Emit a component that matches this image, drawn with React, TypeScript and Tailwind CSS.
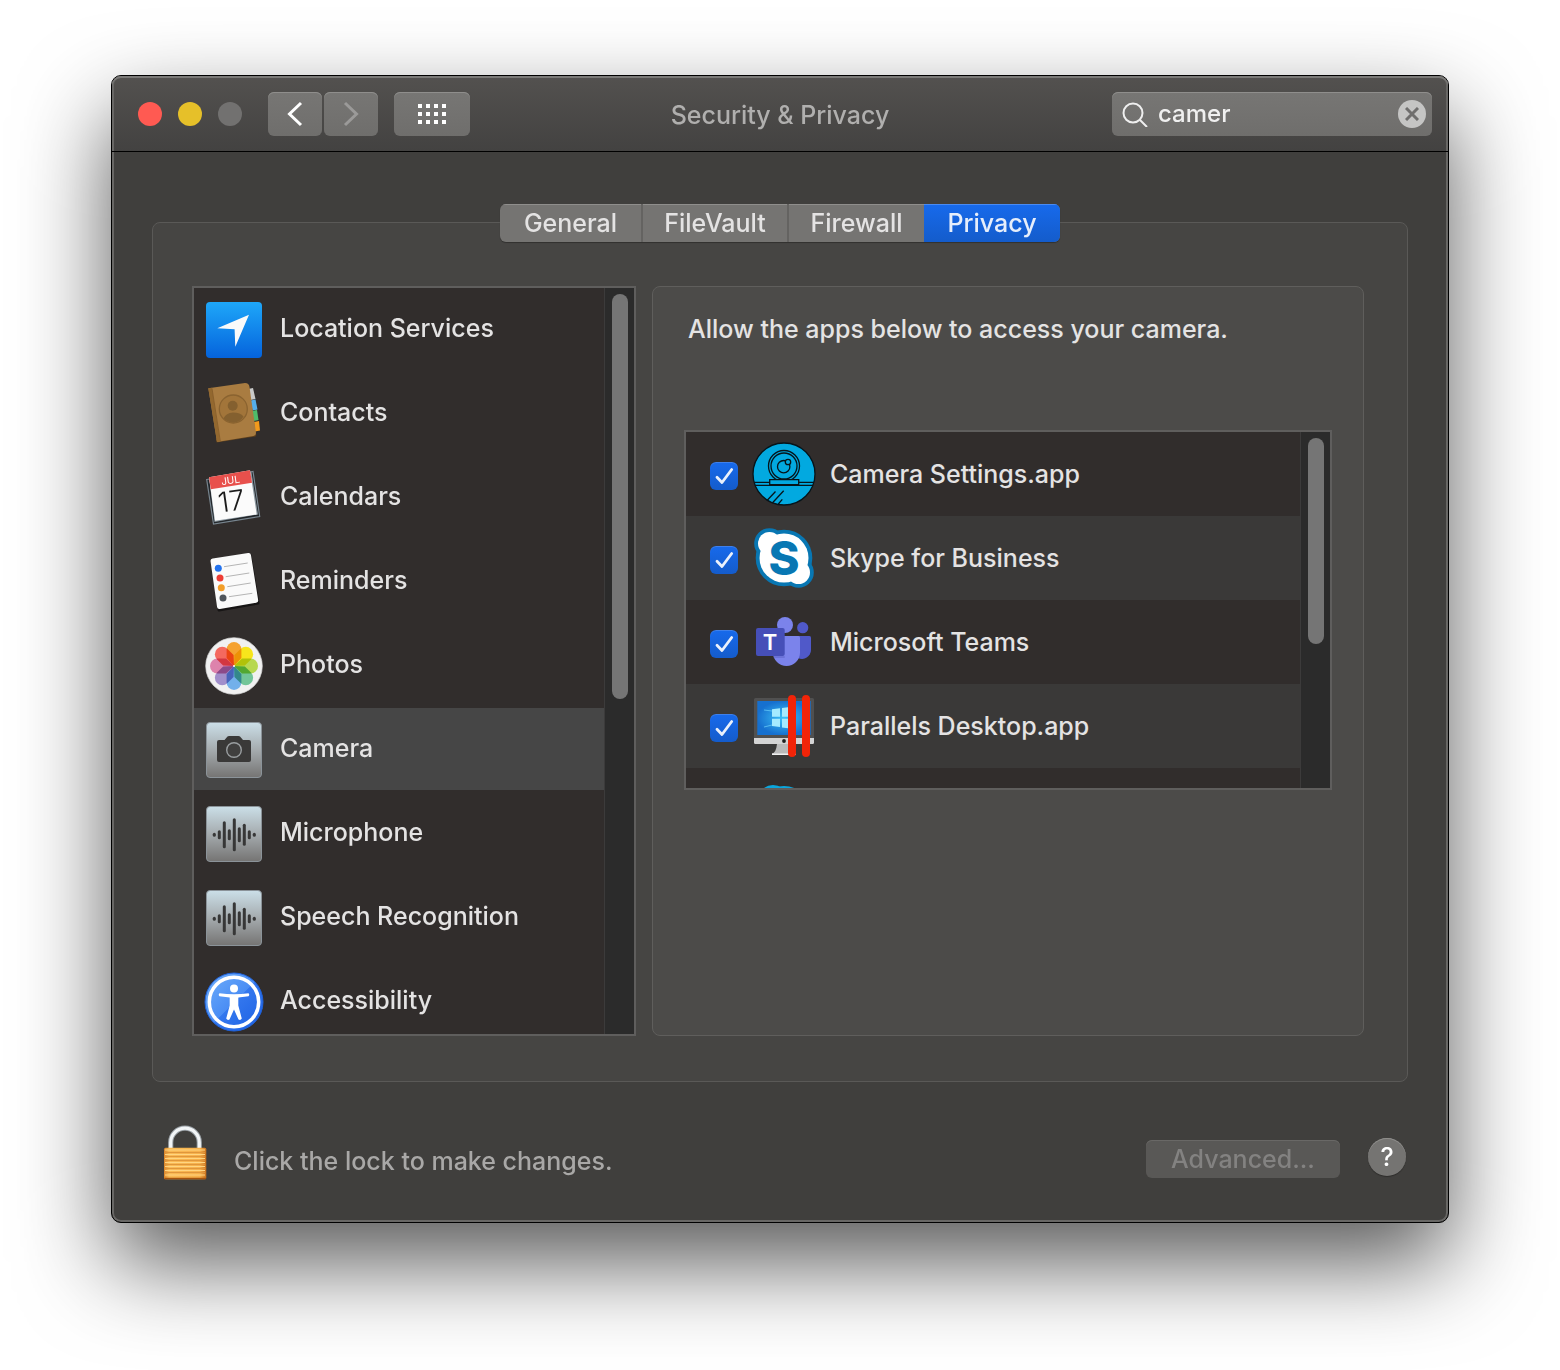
import { useState, type ReactNode } from 'react'
import { cx } from 'class-variance-authority'

const tabs = [
    { name: 'General', width: 'w-[143px]' },
    { name: 'FileVault', width: 'w-[146px]' },
    { name: 'Firewall', width: 'w-[135px]' },
    { name: 'Privacy', width: 'w-[136px]' },
]

function LocationIcon() {
    return (
        <svg viewBox="0 0 60 60" className="size-15 shrink-0 overflow-visible">
            <defs>
                <linearGradient id="loc" x1="0" y1="0" x2="0" y2="1">
                    <stop offset="0" stopColor="#1ea7f9" />
                    <stop offset="1" stopColor="#0563dc" />
                </linearGradient>
            </defs>
            <rect x="2" y="2" width="56" height="56" rx="4" fill="url(#loc)" />
            <path d="M45 14.7 13.3 28.3 30.6 29.3 31.3 46.7Z" fill="#fafafa" />
        </svg>
    )
}

function ContactsIcon() {
    return (
        <svg viewBox="0 0 60 60" className="size-15 shrink-0 overflow-visible">
            <path d="M44 5l5-1 2.5 11-5 1z" fill="#c9c9c9" />
            <path d="M46.5 16.5l5-1 2 10-5 1z" fill="#55aeea" />
            <path d="M48 27l5-1 1.5 10-5 1z" fill="#4fbb6a" />
            <path d="M50 38l5-1 1 9.5-5 1z" fill="#f29a1c" />
            <path d="M12.7 58.5 51.5 52.5Q53 51 51.5 49L50 47 12 55z" fill="#5e401d" />
            <path d="M4.3 4.3 41-1Q45-1 45.5 3L52 49Q52 51.5 49.5 52L13 58Z" fill="#a97c41" />
            <path d="M4.3 4.3 7.8 3.8 16 57.5 13 58Z" fill="#93682f" />
            <path d="M8 4.3 16.3 57" stroke="#7f5827" strokeWidth=".7" fill="none" />
            <circle cx="29.3" cy="25" r="14" fill="#a2753a" stroke="#8a6330" strokeWidth="1.3" />
            <circle cx="28.7" cy="21.7" r="5" fill="#84602f" />
            <path d="M19.5 34.5Q22 29 29 28.5 36.5 28.5 39.5 32.5 36 38.3 30 38.5 24 38.8 19.5 34.5Z" fill="#84602f" />
        </svg>
    )
}

function CalendarIcon() {
    return (
        <svg viewBox="0 0 60 60" className="size-15 shrink-0 overflow-visible">
            <path d="M2.7 11.5 49 3.5 55.7 48.5 9.5 56Z" fill="#22262a" stroke="#78858f" strokeWidth="1.2" />
            <path d="M5 9.5 47.5 4 54 46.5 10.5 54Z" fill="#8b979f" />
            <path d="M5 9.3 46 2.3 52.7 46.5 11 52.7Z" fill="#fbfbfb" />
            <path d="M5 9.3 46 2.3 48 14.7 6.8 21.3Z" fill="#e8504c" />
            <g transform="rotate(-8 27 30)" textAnchor="middle" className="font-[Inter,sans-serif]">
                <text x="29" y="16" fontSize="10" fontWeight="400" fill="#fff">JUL</text>
                <text x="27" y="43" fontSize="28" fontWeight="300" fill="#1b1b1b">17</text>
            </g>
        </svg>
    )
}

function RemindersIcon() {
    return (
        <svg viewBox="0 0 60 60" className="size-15 shrink-0 overflow-visible">
            <path d="M10 8 46 3 54 51 15 58Z" stroke="#171515" strokeWidth="3" strokeLinejoin="round" />
            <path d="M9 9 44.5 3.5 51.7 48.3 15.5 54.5Z" fill="#fafafa" stroke="#fafafa" strokeWidth="5" strokeLinejoin="round" />
            <circle cx="14.3" cy="16.3" r="3.5" fill="#2272ee" />
            <circle cx="16" cy="26" r="3.5" fill="#ee3d35" />
            <circle cx="17.3" cy="35.7" r="3.5" fill="#f29e2a" />
            <circle cx="19" cy="46" r="3.5" fill="#50565c" />
            <path d="M20 14.7 43.7 11M21.7 24.7 45.3 21M23.3 34.7 46.7 31M25 44.7 48.3 41.3" stroke="#b5b5b5" strokeWidth="1" />
        </svg>
    )
}

const petals = ['#f5a230', '#f7e51c', '#b7d850', '#72c598', '#72b0ea', '#a18fcb', '#dd83ac', '#f4695f']

function PhotosIcon() {
    return (
        <svg viewBox="0 0 60 60" className="size-15 shrink-0 overflow-visible">
            <circle cx="30" cy="30" r="28.3" fill="#f1f1f1" stroke="#d6d6d6" strokeWidth=".7" />
            <g className="isolate">
                {petals.map((color, i) => (
                    <path
                        key={color}
                        d="M30 30 22.6 22V13.4A7.4 7.4 0 0 1 37.4 13.4V22Z"
                        fill={color}
                        transform={`rotate(${i * 45} 30 30)`}
                        className="mix-blend-multiply"
                    />
                ))}
            </g>
            <circle cx="30" cy="30" r="1" fill="#fff" />
        </svg>
    )
}

function SilverTile({ id, children }: { id: string; children: ReactNode }) {
    return (
        <svg viewBox="0 0 60 60" className="size-15 shrink-0 overflow-visible">
            <defs>
                <linearGradient id={id} x1="0" y1="0" x2="0" y2="1">
                    <stop offset="0" stopColor="#cbdfe8" />
                    <stop offset=".5" stopColor="#a5abae" />
                    <stop offset="1" stopColor="#757473" />
                </linearGradient>
            </defs>
            <rect x="2.5" y="2.5" width="55" height="55" rx="3.5" fill={`url(#${id})`} stroke="#8b9399" strokeWidth="1" />
            {children}
        </svg>
    )
}

function CameraIcon() {
    return (
        <SilverTile id="tile-camera">
            <path d="M15 20H20.5L23.5 16.5Q24 16 25 16H34.5Q35.5 16 36 16.5L39 20H45Q47 20 47 22V40Q47 42 45 42H15Q13 42 13 40V22Q13 20 15 20Z" fill="#3a3938" />
            <circle cx="30" cy="30" r="7.3" fill="#403f3e" stroke="#9a9ea0" strokeWidth="1.4" />
        </SilverTile>
    )
}

const waveBars = [4, 9, 27, 11, 33, 15, 22, 9, 4]

function WaveIcon({ id }: { id: string }) {
    return (
        <SilverTile id={id}>
            {waveBars.map((height, i) => (
                <rect key={i} x={8.8 + i * 5} y={30.7 - height / 2} width="3" height={height} rx="1.5" fill="#373737" />
            ))}
        </SilverTile>
    )
}

function AccessibilityIcon() {
    return (
        <svg viewBox="0 0 60 60" className="size-15 shrink-0 overflow-visible">
            <defs>
                <linearGradient id="acc" x1="0" y1="0" x2="1" y2="1">
                    <stop offset=".1" stopColor="#69a9fa" />
                    <stop offset=".5" stopColor="#4a8df4" />
                    <stop offset=".51" stopColor="#3377ee" />
                    <stop offset="1" stopColor="#1c5fe2" />
                </linearGradient>
            </defs>
            <circle cx="30" cy="30" r="29" fill="url(#acc)" stroke="#1f62dc" strokeWidth="1" />
            <circle cx="30" cy="30" r="24.7" fill="none" stroke="#fff" strokeWidth="3.5" />
            <circle cx="30" cy="16.5" r="4" fill="#fff" />
            <path d="M15.500 21.200Q30 23.500 44.500 21.200 46 22.800 44.500 24.200L34.300 25.600V33.500L37.800 46.600Q36.500 48.800 34.500 47.500L30 37.500 25.500 47.500Q23.500 48.800 22.200 46.600L25.700 33.500V25.600L15.500 24.200Q14 22.800 15.500 21.200Z" fill="#fff" />
        </svg>
    )
}

function WebcamIcon() {
    return (
        <svg viewBox="0 0 64 64" className="size-16 shrink-0" fill="none" stroke="#06141a" strokeWidth="1.3">
            <circle cx="32" cy="32" r="31" fill="#02a9e0" />
            <circle cx="32" cy="24" r="15.5" />
            <circle cx="32" cy="24" r="13" />
            <circle cx="31.7" cy="24.7" r="6.2" />
            <circle cx="36" cy="20" r="2.7" fill="#02a9e0" />
            <path d="M2.5 40.3H17.7M46.7 40.3H61.5M3 43.3H61" />
            <path d="M17.7 37.7H46.7V42.7H17.7Z" fill="#02a9e0" />
            <path d="M23.5 49.5 15 58.5M31.7 48.7 20.3 61M30.3 57.3 26.3 62" />
        </svg>
    )
}

function SkypeBusinessIcon() {
    return (
        <svg viewBox="0 0 64 64" className="size-16 shrink-0">
            <g fill="#0877b3">
                <circle cx="32" cy="32" r="28.3" />
                <circle cx="17.5" cy="17.5" r="15.3" />
                <circle cx="46.5" cy="46.5" r="15.3" />
            </g>
            <g fill="#fff">
                <circle cx="32" cy="32" r="24.5" />
                <circle cx="17.5" cy="17.5" r="11.5" />
                <circle cx="46.5" cy="46.5" r="11.5" />
            </g>
            <text x="32" y="49" fontSize="47" fontWeight="800" textAnchor="middle" fill="#0877b3" className="font-[Inter,sans-serif]">S</text>
        </svg>
    )
}

function TeamsIcon() {
    return (
        <svg viewBox="0 0 64 64" className="size-16 shrink-0">
            <circle cx="50.7" cy="17.7" r="5.6" fill="#5059c9" />
            <path d="M46 26H57.5Q59 26 59 27.5V40A9 9 0 0 1 46 48Z" fill="#5059c9" />
            <circle cx="33" cy="15" r="8" fill="#7b83eb" />
            <path d="M21 26H46.5Q48 26 48 27.5V42.5A13.5 13.5 0 0 1 21 42.5Z" fill="#7b83eb" />
            <path d="M21 46H32.7V48H21.8Z" fill="#5b62c6" opacity=".5" />
            <rect x="4" y="18" width="28.7" height="28" rx="2" fill="#464fb8" />
            <text x="18" y="40" fontSize="22" fontWeight="600" textAnchor="middle" fill="#fff" className="font-[Inter,sans-serif]">T</text>
        </svg>
    )
}

function ParallelsIcon() {
    return (
        <svg viewBox="0 0 64 64" className="size-16 shrink-0">
            <defs>
                <radialGradient id="win">
                    <stop offset="0" stopColor="#3cc3f8" />
                    <stop offset="1" stopColor="#1670cf" />
                </radialGradient>
            </defs>
            <path d="M25 50H40V59H44V61H20V59.5Q24 59 25 50Z" fill="#b9b9b9" />
            <path d="M20 59.5H44V61H20Z" fill="#f0f0f0" />
            <rect x="2" y="4" width="60" height="46" rx="1.5" fill="#505050" />
            <path d="M2 44H62V48.5Q62 50 60.5 50H3.5Q2 50 2 48.5Z" fill="#d4d4d4" />
            <rect x="5.3" y="7" width="53.4" height="34" fill="url(#win)" />
            <path d="M20 15.3 28 14.3V22.7H20ZM30 14 38 13V22.7H30ZM20 24.7H28V33L20 32ZM30 24.7H38V34.5L30 33.4Z" fill="#a5ebff" />
            <path d="M12 16 20 17M12 33 20 31" stroke="#6fd2fa" strokeWidth=".7" />
            <circle cx="32" cy="47" r="1.9" fill="#1e1e1e" />
            <rect x="36" y="1" width="8" height="62" rx="4" fill="#f22408" />
            <rect x="50" y="1" width="8" height="62" rx="4" fill="#f22408" />
        </svg>
    )
}

function SkypeIcon() {
    return (
        <svg viewBox="0 0 64 64" className="size-16 shrink-0">
            <circle cx="32" cy="35" r="27" fill="#0ba5dc" />
            <circle cx="21" cy="22" r="15" fill="#0ba5dc" />
        </svg>
    )
}

function LockIcon() {
    return (
        <svg viewBox="0 0 44 56" className="h-14 w-11 shrink-0">
            <defs>
                <linearGradient id="lock" x1="0" y1="0" x2="1" y2="0">
                    <stop offset="0" stopColor="#d9842a" />
                    <stop offset=".12" stopColor="#f9bb55" />
                    <stop offset=".85" stopColor="#f6b04a" />
                    <stop offset="1" stopColor="#c8701c" />
                </linearGradient>
            </defs>
            <path d="M7.7 24V17.5A14.3 14.3 0 0 1 36.3 17.5V24" fill="none" stroke="#9aa1a6" strokeWidth="5.2" />
            <path d="M7.7 24V17.5A14.3 14.3 0 0 1 36.3 17.5V24" fill="none" stroke="#f2f5f7" strokeWidth="3.2" />
            <rect x="1" y="22.7" width="42.3" height="31.6" rx="1.5" fill="url(#lock)" />
            <path d="M2 27.5H42M2 31.5H42M2 35.5H42M2 39.5H42M2 43.5H42M2 47.5H42" stroke="#e0963c" strokeWidth="1" />
            <path d="M2 25H42M2 29.5H42M2 33.5H42M2 37.5H42M2 41.5H42M2 45.5H42M2 50H42" stroke="#ffd582" strokeWidth="1" />
            <path d="M1.5 53.5H43" stroke="#a4530f" strokeWidth="1.5" />
        </svg>
    )
}

const categories = [
    { name: 'Location Services', icon: <LocationIcon /> },
    { name: 'Contacts', icon: <ContactsIcon /> },
    { name: 'Calendars', icon: <CalendarIcon /> },
    { name: 'Reminders', icon: <RemindersIcon /> },
    { name: 'Photos', icon: <PhotosIcon /> },
    { name: 'Camera', icon: <CameraIcon /> },
    { name: 'Microphone', icon: <WaveIcon id="tile-mic" /> },
    { name: 'Speech Recognition', icon: <WaveIcon id="tile-speech" /> },
    { name: 'Accessibility', icon: <AccessibilityIcon /> },
]

const apps = [
    { name: 'Camera Settings.app', icon: <WebcamIcon /> },
    { name: 'Skype for Business', icon: <SkypeBusinessIcon /> },
    { name: 'Microsoft Teams', icon: <TeamsIcon /> },
    { name: 'Parallels Desktop.app', icon: <ParallelsIcon /> },
]

function Scrollbar({ thumb }: { thumb: string }) {
    return (
        <div className="w-[30px] shrink-0 border-l border-[#3c3b3b] bg-[#2b2b2b] pl-[7px] pt-1.5">
            <div className={cx('w-4 rounded-full bg-[#757575]', thumb)} />
        </div>
    )
}

export default function App() {
    const [query, setQuery] = useState('camer')
    const [tab, setTab] = useState('Privacy')
    const [category, setCategory] = useState('Camera')
    const [allowed, setAllowed] = useState(apps.map(app => app.name))

    const toggle = (name: string) =>
        setAllowed(allowed.includes(name) ? allowed.filter(n => n !== name) : [...allowed, name])

    return (
        <main className="bg-white px-[111px] pt-[75px] pb-[147px] font-[Inter,sans-serif] text-[25px] leading-8 font-medium text-[#e4e3e3]">
            <div className="rounded-[10px] border border-black bg-[#403f3d] shadow-[0_40px_90px_rgba(0,0,0,0.65),inset_0_0_0_2px_#686765]">
                {/* Title bar */}
                <header className="grid h-[76px] grid-cols-[1fr_auto_1fr] items-center rounded-t-[9px] border-b border-black bg-linear-to-b from-[#53514f] to-[#434241] px-4 shadow-[inset_0_2px_0_#7b7a78,inset_2px_0_0_#686765,inset_-2px_0_0_#686765]">
                    <div className="flex items-center pl-2.5">
                        <div className="flex gap-4">
                            <button aria-label="Close" className="size-6 rounded-full bg-[#ff5a52]" />
                            <button aria-label="Minimize" className="size-6 rounded-full bg-[#e6c029]" />
                            <button aria-label="Zoom" disabled className="size-6 rounded-full bg-[#727170]" />
                        </div>
                        <div className="ml-[26px] flex gap-0.5">
                            <button aria-label="Back" className="flex h-11 w-[54px] items-center justify-center rounded-md bg-linear-to-b from-[#777674] to-[#6f6e6c] shadow-[inset_0_1px_0_#8f8e8c]">
                                <svg viewBox="0 0 16 26" className="h-[26px] w-4" fill="none" stroke="#fff" strokeWidth="3">
                                    <path d="M14 2 2.5 13 14 24" />
                                </svg>
                            </button>
                            <button aria-label="Forward" disabled className="flex h-11 w-[54px] items-center justify-center rounded-md bg-linear-to-b from-[#777674] to-[#6f6e6c] shadow-[inset_0_1px_0_#8f8e8c]">
                                <svg viewBox="0 0 16 26" className="h-[26px] w-4" fill="none" stroke="#9b9a99" strokeWidth="3">
                                    <path d="M2 2 13.5 13 2 24" />
                                </svg>
                            </button>
                        </div>
                        <button aria-label="Show All" className="ml-4 flex h-11 w-[76px] items-center justify-center rounded-md bg-linear-to-b from-[#777674] to-[#6f6e6c] shadow-[inset_0_1px_0_#8f8e8c]">
                            <svg viewBox="0 0 28 20" className="h-5 w-7" stroke="#fff" strokeWidth="4" strokeDasharray="4 4">
                                <path d="M0 2H28M0 10H28M0 18H28" />
                            </svg>
                        </button>
                    </div>
                    <h1 className="pt-0.5 text-[#b0afae]">Security &amp; Privacy</h1>
                    <div className="flex h-11 w-[320px] items-center justify-self-end rounded-md bg-linear-to-b from-[#777674] to-[#6f6e6c] pr-1.5 pl-2.5 shadow-[inset_0_1px_0_#8f8e8c]">
                        <svg viewBox="0 0 26 26" className="size-[26px] shrink-0" fill="none" stroke="#efefef" strokeWidth="2">
                            <circle cx="11" cy="12" r="9.5" />
                            <path d="M18 19 25 26" />
                        </svg>
                        <input
                            aria-label="Search"
                            value={query}
                            onChange={e => setQuery(e.target.value)}
                            className="ml-2.5 min-w-0 flex-1 bg-transparent text-2xl text-[#f0f0f0] outline-none"
                        />
                        <button aria-label="Clear search" onClick={() => setQuery('')} className="flex size-7 items-center justify-center rounded-full bg-[#c5c5c4]">
                            <svg viewBox="0 0 14 14" className="size-3.5" stroke="#6f6e6d" strokeWidth="3">
                                <path d="M1 1 13 13M13 1 1 13" />
                            </svg>
                        </button>
                    </div>
                </header>

                <div className="px-10 pt-[52px]">
                    {/* Tabs sit across the top edge of the panel */}
                    <div role="tablist" className="relative z-10 mx-auto -mb-5 flex w-fit overflow-hidden rounded-md bg-[#757472] shadow-[0_1px_1px_rgba(0,0,0,0.3)]">
                        {tabs.map(({ name, width }, i) => (
                            <button
                                key={name}
                                role="tab"
                                aria-selected={tab === name}
                                onClick={() => setTab(name)}
                                className={cx(
                                    'h-[38px]',
                                    width,
                                    i < tabs.length - 1 && tab !== name && tabs[i + 1].name !== tab && 'border-r-2 border-[#646361]',
                                    tab === name
                                        ? 'bg-linear-to-b from-[#176aec] to-[#145ccb] text-[#e6eefb] shadow-[inset_0_1px_0_#4a8bf2]'
                                        : 'shadow-[inset_0_1px_0_#8f8e8c]'
                                )}
                            >
                                {name}
                            </button>
                        ))}
                    </div>

                    <section className="flex gap-4 rounded-lg border border-[#5a5957] bg-[#464543] pt-[63px] pr-[43px] pb-[45px] pl-[39px]">
                        {/* Categories */}
                        <div className="flex h-[750px] w-[444px] shrink-0 border-2 border-[#5f5e5d] bg-[#312d2c]">
                            <ul className="flex-1 overflow-hidden">
                                {categories.map(({ name, icon }) => (
                                    <li key={name} className="h-[84px]">
                                        <button
                                            onClick={() => setCategory(name)}
                                            className={cx(
                                                'flex h-[82px] w-full items-center gap-4 pt-0.5 pl-2.5 text-left',
                                                category === name && 'bg-[#464646]'
                                            )}
                                        >
                                            {icon}
                                            <span className="pb-1">{name}</span>
                                        </button>
                                    </li>
                                ))}
                            </ul>
                            <Scrollbar thumb="h-[405px]" />
                        </div>

                        {/* Apps with camera access */}
                        <div className="flex-1 rounded-lg border border-[#5f5e5c] bg-[#4c4b49] px-[31px] pt-[26px]">
                            <p className="pl-1">Allow the apps below to access your camera.</p>
                            <div className="mt-[85px] flex h-[360px] border-2 border-[#5f5e5d] bg-[#312d2c]">
                                <ul className="flex-1 overflow-hidden">
                                    {apps.map(({ name, icon }) => (
                                        <li key={name} className="even:bg-[#3a3938]">
                                            <label className="flex h-[84px] items-center gap-3.5 pl-6">
                                                <span className="relative mt-1 size-7 shrink-0">
                                                    <input
                                                        type="checkbox"
                                                        checked={allowed.includes(name)}
                                                        onChange={() => toggle(name)}
                                                        className="peer block size-7 appearance-none rounded-md bg-[#6b6a69] shadow-[inset_0_1px_0_#3f80ea] checked:bg-linear-to-b checked:from-[#176aec] checked:to-[#145ccb]"
                                                    />
                                                    <svg viewBox="0 0 28 28" className="pointer-events-none absolute inset-0 hidden size-7 peer-checked:block" fill="none" stroke="#eaf1fc" strokeWidth="2.8" strokeLinecap="round" strokeLinejoin="round">
                                                        <path d="M7 15.3 12 20.5 21.7 7.5" />
                                                    </svg>
                                                </span>
                                                {icon}
                                                <span>{name}</span>
                                            </label>
                                        </li>
                                    ))}
                                    <li className="flex h-[84px] items-center pl-[66px]">
                                        <SkypeIcon />
                                    </li>
                                </ul>
                                <Scrollbar thumb="h-[206px]" />
                            </div>
                        </div>
                    </section>
                </div>

                <footer className="flex items-center pt-[43px] pr-[42px] pb-[41px] pl-[51px]">
                    <LockIcon />
                    <p className="mr-auto ml-[27px] pt-4 text-[#a9a8a7]">Click the lock to make changes.</p>
                    <div className="flex items-end gap-7 pt-2.5">
                        <button disabled className="h-[38px] w-[194px] rounded-md bg-[#595856] text-[#838281] shadow-[inset_0_1px_0_#696866]">
                            Advanced...
                        </button>
                        <button aria-label="Help" className="mb-0.5 size-[38px] rounded-full bg-[#757472] text-center text-white shadow-[0_1px_1px_rgba(0,0,0,0.3),inset_0_1px_0_#8f8e8c]">
                            ?
                        </button>
                    </div>
                </footer>
            </div>
        </main>
    )
}
